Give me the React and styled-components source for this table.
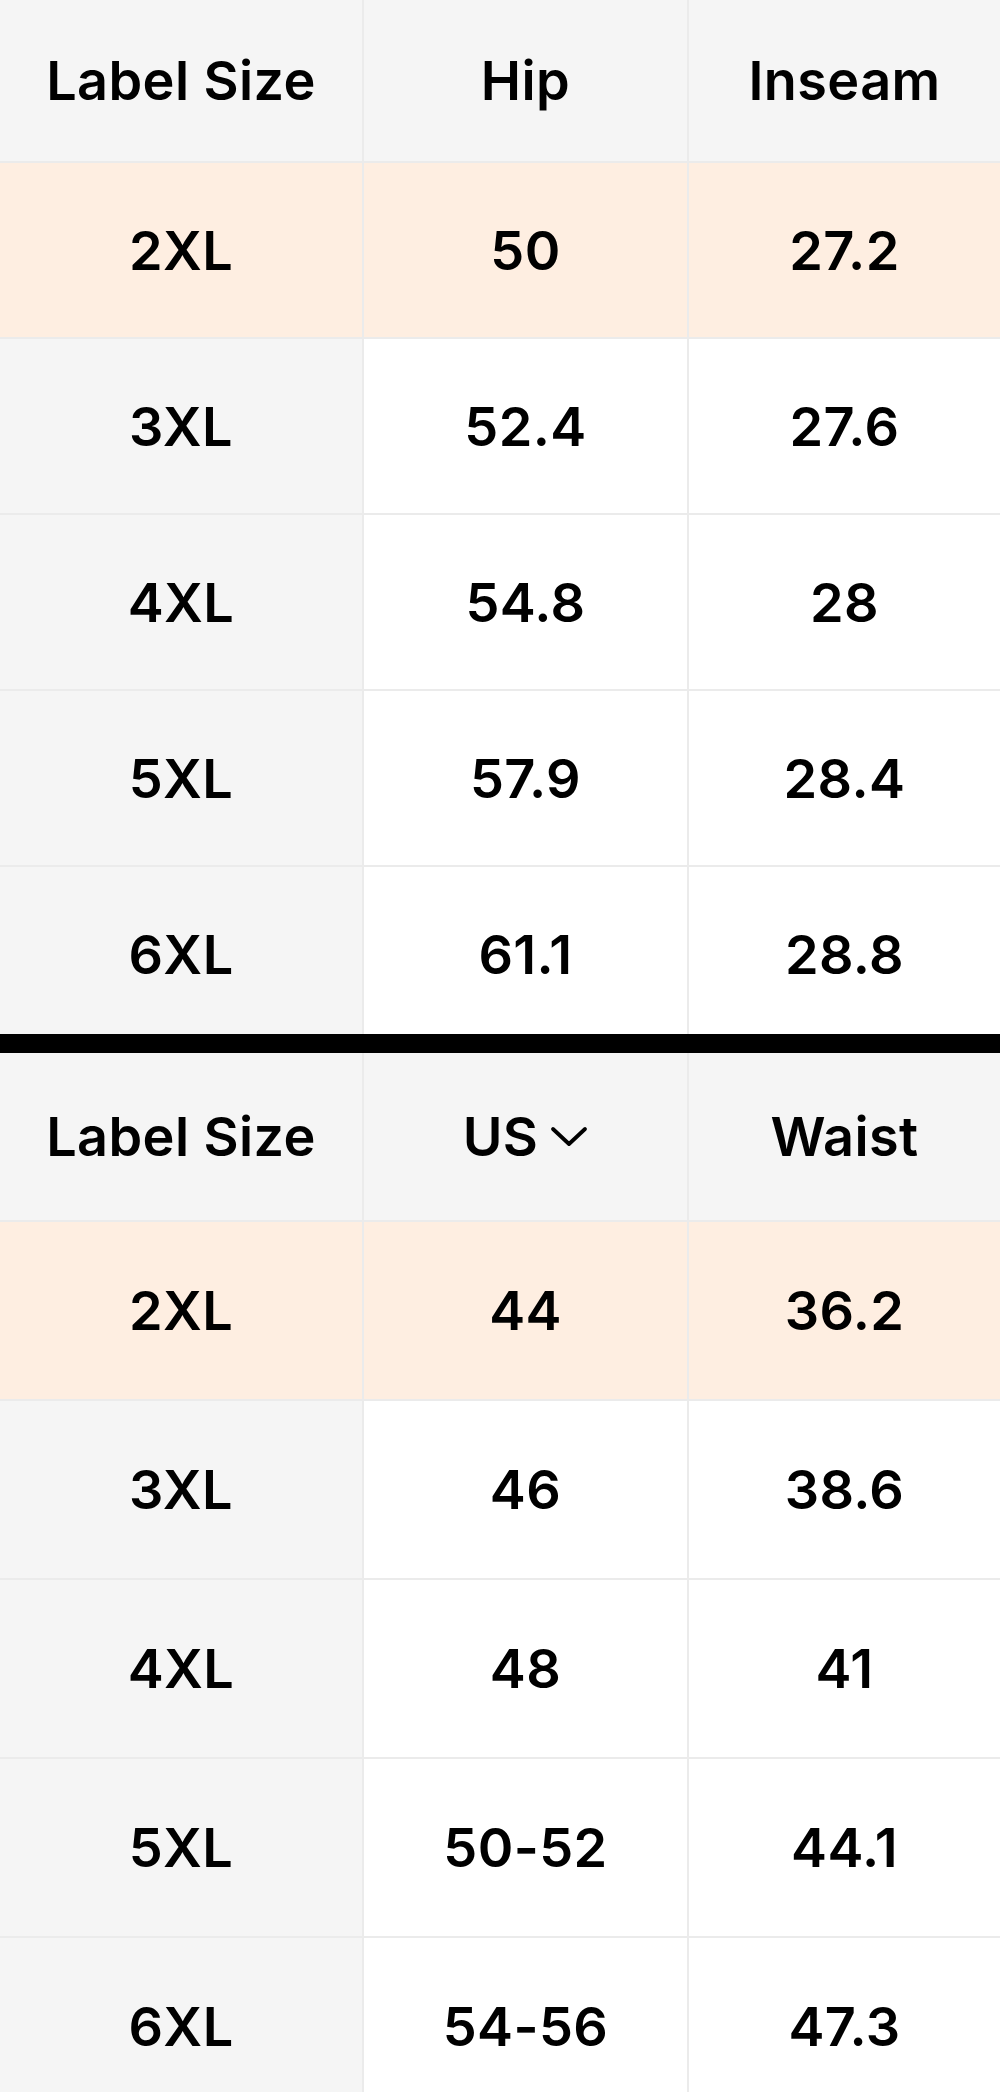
import styled, { createGlobalStyle } from "styled-components";

const GlobalStyle = createGlobalStyle`
  html, body {
    margin: 0;
    padding: 0;
    background: #fff;
  }
  body {
    font-family: Inter, "Liberation Sans", Arial, sans-serif;
    color: #000;
    -webkit-font-smoothing: antialiased;
  }
`;

const Page = styled.div`
  width: 1000px;
  height: 2092px;
  overflow: hidden;
  display: flex;
  flex-direction: column;
`;

const Viewport = styled.div`
  height: ${(p) => p.height}px;
  overflow: hidden;
  flex-shrink: 0;
`;

const Divider = styled.div`
  height: 19px;
  background: #000;
  flex-shrink: 0;
`;

const Table = styled.div`
  display: grid;
  grid-template-columns: 364px 325px 1fr;
`;

const Cell = styled.div`
  height: ${(p) => p.height}px;
  display: flex;
  align-items: center;
  justify-content: center;
  gap: 12px;
  font-size: 54px;
  font-weight: 600;
  letter-spacing: 0.4px;
  background: ${(p) => (p.hot ? "#feeee1" : p.shaded ? "#f5f5f5" : "#fff")};
  border-bottom: 2px solid #ebebeb;
  border-right: ${(p) => (p.last ? "none" : "2px solid #ebebeb")};
  box-sizing: border-box;
`;

const Chevron = () => (
  <svg width="38" height="22" viewBox="0 0 38 22" fill="none">
    <path
      d="M3 3 L19 18 L35 3"
      stroke="#000"
      strokeWidth="3.8"
      strokeLinecap="round"
      strokeLinejoin="round"
    />
  </svg>
);

const SizeTable = ({ headers, rows, headerHeight, rowHeight }) => (
  <Table>
    {headers.map((h, i) => (
      <Cell key={i} height={headerHeight} shaded last={i === 2}>
        {h}
      </Cell>
    ))}
    {rows.map((r, ri) =>
      r.map((v, ci) => (
        <Cell
          key={ri + "-" + ci}
          height={rowHeight}
          hot={ri === 0}
          shaded={ci === 0}
          last={ci === 2}
        >
          {v}
        </Cell>
      ))
    )}
  </Table>
);

const topRows = [
  ["2XL", "50", "27.2"],
  ["3XL", "52.4", "27.6"],
  ["4XL", "54.8", "28"],
  ["5XL", "57.9", "28.4"],
  ["6XL", "61.1", "28.8"],
];

const bottomRows = [
  ["2XL", "44", "36.2"],
  ["3XL", "46", "38.6"],
  ["4XL", "48", "41"],
  ["5XL", "50-52", "44.1"],
  ["6XL", "54-56", "47.3"],
];

export default function App() {
  return (
    <Page>
      <GlobalStyle />
      <Viewport height={1034}>
        <SizeTable
          headers={["Label Size", "Hip", "Inseam"]}
          rows={topRows}
          headerHeight={163}
          rowHeight={176}
        />
      </Viewport>
      <Divider />
      <SizeTable
        headers={[
          "Label Size",
          <>
            US
            <Chevron />
          </>,
          "Waist",
        ]}
        rows={bottomRows}
        headerHeight={169}
        rowHeight={179}
      />
    </Page>
  );
}
